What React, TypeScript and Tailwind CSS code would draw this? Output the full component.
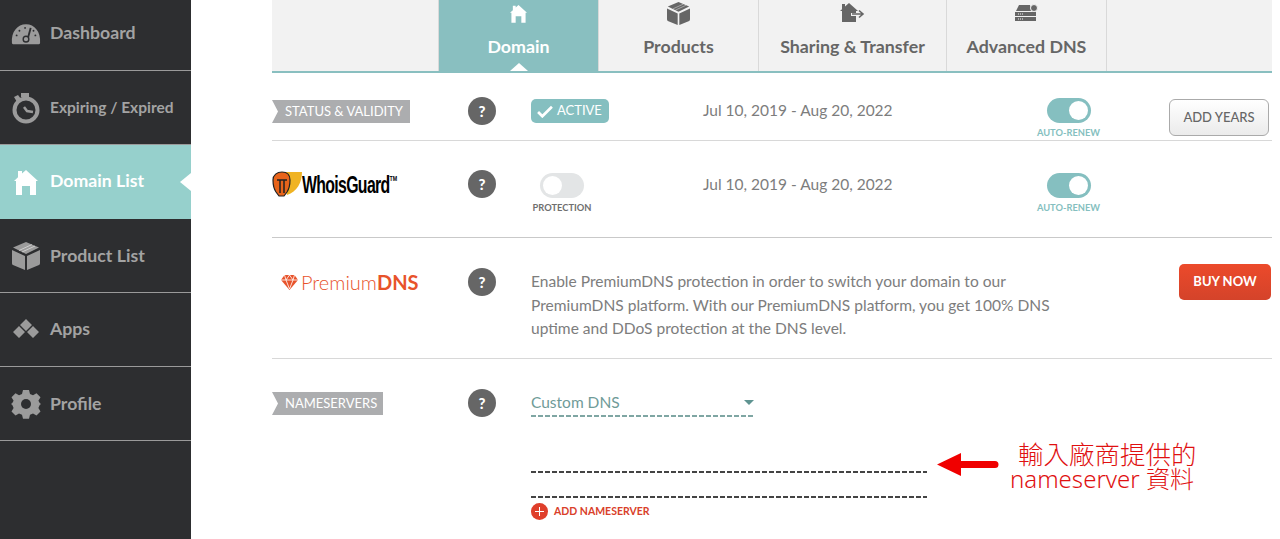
import React from "react";

const Gauge = () => (
  <svg width="30" height="23" viewBox="0 0 32 24"><path d="M1 22C0 10 7 2 16 2s16 8 15 20c0 1-1 1.500-2 1.500H3c-1 0-2-.5-2-1.500z" fill="#9b9b9b"/><path d="M21 6l-3 11" stroke="#2d2e30" strokeWidth="2"/><circle cx="16" cy="18" r="3" fill="#9b9b9b" stroke="#2d2e30" strokeWidth="1.500"/><g fill="#2d2e30"><circle cx="6" cy="14" r="1"/><circle cx="9" cy="9" r="1"/><circle cx="15" cy="6" r="1"/><circle cx="26" cy="14" r="1"/><circle cx="24" cy="9" r="1"/></g></svg>
);
const Clock = () => (
  <svg width="30" height="32" viewBox="0 0 30 32"><circle cx="15" cy="18" r="11.500" fill="none" stroke="#9b9b9b" strokeWidth="4"/><path d="M10 1h8v4h-8zM3 5l4-2 3 4-4 3z" fill="#9b9b9b"/><path d="M13 15l3 4 6 1" fill="none" stroke="#9b9b9b" strokeWidth="2.500"/></svg>
);
const House = ({ c, w, h }: { c: string; w: number; h: number }) => (
  <svg width={w} height={h} viewBox="0 0 24 26"><path d="M12 1l12 11h-2v14h-6v-9H8v9H2V12H0l4-3.700V2h4v2.600z" fill={c}/></svg>
);
const Box = ({ c, w, h }: { c: string; w: number; h: number }) => (
  <svg width={w} height={h} viewBox="0 0 28 28"><path d="M0 8l13 6v14L1 23c-.7-.3-1-1-1-2zM28 8l-13 6v14l12-5c.7-.3 1-1 1-2z" fill={c}/><path d="M14 0L1 5.500 14 12 27 5.500z" fill={c}/><path d="M7 8.500l13-6M10 10l13-6" stroke="#fff" strokeOpacity=".5" strokeWidth="1"/></svg>
);
const Apps = () => (
  <svg width="28" height="20" viewBox="0 0 28 20"><path d="M14 0l6 6-6 6-6-6zM7 7l6 6-6 6-6-6zM21 7l6 6-6 6-6-6z" fill="#9b9b9b"/></svg>
);
const Gear = () => (
  <svg width="30" height="30" viewBox="0 0 30 30"><path d="M12 1h6l1 4 3 1.300 3.500-2.100 4 4-2.100 3.500L28.700 14l1.300 1v0l-1.300 1-1.300 3 2.100 3.500-4 4-3.500-2.100-3 1.300-1 4h-6l-1-4-3-1.300-3.500 2.100-4-4 2.100-3.500L1.300 16 0 15l1.300-1 1.300-2.200L.5 8.200l4-4L8 6.300 11 5z" fill="#9b9b9b"/><circle cx="15" cy="15" r="5" fill="#2d2e30"/></svg>
);
const Share = () => (
  <svg width="26" height="20" viewBox="0 0 26 20"><path d="M9 0l9 8h-2v2h-5v3h5v6H2V8H0l2-1.800V1h3v2.500z" fill="#666"/><path d="M12 11h10M19 7.500l4 3.500-4 3.500" fill="none" stroke="#666" strokeWidth="1.600"/></svg>
);
const Server = () => (
  <svg width="24" height="18" viewBox="0 0 24 18"><path d="M4 1h11l1 6H1z" fill="#666"/><path d="M0 8h21v4H0zM0 13h21v4H0z" fill="#666"/><circle cx="19" cy="4" r="3.500" fill="#666" stroke="#f2f2f2"/><path d="M3 10h6M3 15h6" stroke="#f2f2f2" strokeDasharray="1 1"/></svg>
);
const Help = () => (
  <div className="w-7 h-7 rounded-full bg-[#666666] text-white flex items-center justify-center text-[15px] font-black">?</div>
);
const Toggle = ({ on, label }: { on: boolean; label: string }) => (
  <div className="flex flex-col items-center">
    <div className={`w-[44px] h-[25px] rounded-full flex items-center px-[3px] ${on ? "bg-[#85bfc0] justify-end" : "bg-[#e3e5e6] justify-start"}`}>
      <div className="w-[19px] h-[19px] rounded-full bg-white" />
    </div>
    <div className={`mt-[4px] text-[9.300px] leading-[11px] font-bold whitespace-nowrap ${on ? "text-[#85bfc0]" : "text-[#6f6f6f]"}`}>{label}</div>
  </div>
);
const Tag = ({ children, w }: { children: React.ReactNode; w: string }) => (
  <div className={`${w} h-[23px] bg-[#acadaf] text-white text-[13px] leading-[23px] pl-[13px] whitespace-nowrap [clip-path:polygon(0_0,100%_0,100%_100%,0_100%,6px_50%)]`}>{children}</div>
);
const Tab = ({ w, label, icon, active }: { w: string; label: string; icon: React.ReactNode; active?: boolean }) => (
  <div className={`${w} h-full relative flex flex-col items-center border-l border-[#d9d9d9] ${active ? "bg-[#89bfc0] text-white" : "text-[#666666]"}`}>
    <div className="h-[26px] flex items-center justify-center">{icon}</div>
    <div className="mt-[9px] text-[17.800px] leading-[22px] font-bold whitespace-nowrap">{label}</div>
    {active && <div className="absolute bottom-0 left-1/2 -ml-[9px] w-0 h-0 border-x-[9px] border-x-transparent border-b-[8px] border-b-white" />}
  </div>
);
const Nav = ({ icon, label, h, small, active, pad }: { icon: React.ReactNode; label: string; h: string; small?: boolean; active?: boolean; pad: string }) => (
  <div className={`${h} ${pad} relative flex items-center ${active ? "bg-[#96d0cc] text-white" : "text-[#a3a3a3] border-b-[1.500px] border-[#9a9a9a]"}`}>
    <div className="w-[50px] shrink-0 flex justify-center pl-[4px] pr-[2px]">{icon}</div>
    <span className={`${small ? "text-[15.500px]" : "text-[17.700px]"} font-bold whitespace-nowrap`}>{label}</span>
    {active && <div className="absolute right-0 top-1/2 -mt-[9px] w-0 h-0 border-y-[9px] border-y-transparent border-r-[11px] border-r-white" />}
  </div>
);
const DashLine = ({ dark }: { dark?: boolean }) => (
  <div className={`h-[2px] w-full ${dark ? "bg-[repeating-linear-gradient(to_right,#444444_0,#444444_5px,transparent_5px,transparent_7px)]" : "bg-[repeating-linear-gradient(to_right,#7fa6a3_0,#7fa6a3_5px,transparent_5px,transparent_7px)]"}`} />
);

export default function App() {
  return (
    <div className="w-[1280px] h-[539px] overflow-hidden flex bg-white relative font-['Lato',sans-serif]">
      <aside className="w-[191px] shrink-0 h-full bg-[#2d2e30]">
        <Nav h="h-[71px]" pad="pb-[4px]" icon={<Gauge />} label="Dashboard" />
        <Nav h="h-[74px]" pad="pt-[1px]" icon={<Clock />} label="Expiring / Expired" small />
        <Nav h="h-[74px]" pad="pb-[1px]" icon={<House c="#fff" w={24} h={26} />} label="Domain List" active />
        <Nav h="h-[74px]" pad="pt-[1px]" icon={<Box c="#9b9b9b" w={28} h={28} />} label="Product List" />
        <Nav h="h-[74px]" pad="pb-[1px]" icon={<Apps />} label="Apps" />
        <Nav h="h-[74px]" pad="pt-[1px]" icon={<Gear />} label="Profile" />
      </aside>
      <main className="ml-[81px] w-[1000px]">
        <div className="h-[73px] bg-[#f2f2f2] border-b-2 border-[#89bfc0] flex">
          <div className="w-[166px]" />
          <Tab w="w-[160px]" label="Domain" icon={<House c="#fff" w={17} h={19} />} active />
          <Tab w="w-[160px]" label="Products" icon={<Box c="#666" w={23} h={23} />} />
          <Tab w="w-[188px]" label="Sharing & Transfer" icon={<Share />} />
          <Tab w="w-[160px]" label="Advanced DNS" icon={<Server />} />
          <div className="flex-1 border-l border-[#d9d9d9]" />
        </div>

        <div className="h-[68px] border-b border-[#d8d8d8] flex pt-[24px] text-[#7d7d7d]">
          <div className="w-[196px] pt-[3px]"><Tag w="w-[138px]">STATUS &amp; VALIDITY</Tag></div>
          <div className="w-[63px]"><Help /></div>
          <div className="w-[172px] pt-[2px]">
            <div className="w-[78px] h-[24px] rounded-[5px] bg-[#85bfc0] text-white text-[13px] flex items-center pl-[6px] gap-[4px]">
              <svg width="16" height="13" viewBox="0 0 15 12"><path d="M1 6.500l4 4L14 1.500" fill="none" stroke="#fff" strokeWidth="2.500"/></svg>
              ACTIVE
            </div>
          </div>
          <div className="w-[324px] text-[15.500px] leading-[28px] -mt-[1px]">Jul 10, 2019 - Aug 20, 2022</div>
          <div className="w-[82px] pt-[1px] pl-[1px]"><Toggle on label="AUTO-RENEW" /></div>
          <div className="ml-[60px] w-[100px] h-[37px] mt-[2px] rounded-[6px] border border-[#aaaaaa] bg-gradient-to-b from-white to-[#ebebeb] text-[#666666] text-[13px] font-medium flex items-center justify-center">ADD YEARS</div>
        </div>

        <div className="h-[97px] border-b border-[#c9c9c9] flex pt-[29px] text-[#7d7d7d]">
          <div className="w-[196px] flex items-start">
            <div className="flex items-center h-[28px]">
              <svg width="31" height="26" viewBox="0 0 31 26"><path d="M9 1h21c0 10-5 20-15 23z" fill="#f0b323"/><path d="M1 9c0-5 4-8 9-8s8 3 8 8c0 5-1 9-3 12l-3 4H7l-3-4C2 18 1 14 1 9z" fill="#e8641b" stroke="#222" strokeWidth="1.200"/><path d="M5 9h10M8 9v13M12 9v13" stroke="#222" strokeWidth="1.500" fill="none"/></svg>
              <span className="font-['Liberation_Sans',sans-serif] font-bold text-[24px] leading-none tracking-[-1px] text-black ml-[-1px] mt-[2px] [transform:scaleX(0.66)] origin-left whitespace-nowrap">WhoisGuard<sup className="text-[8px] top-[-12px] tracking-normal">TM</sup></span>
            </div>
          </div>
          <div className="w-[63px]"><Help /></div>
          <div className="w-[172px] pt-[3px]">
            <div className="w-[62px]"><Toggle on={false} label="PROTECTION" /></div>
          </div>
          <div className="w-[324px] text-[15.500px] leading-[28px]">Jul 10, 2019 - Aug 20, 2022</div>
          <div className="w-[82px] pt-[3px] pl-[1px]"><Toggle on label="AUTO-RENEW" /></div>
        </div>

        <div className="h-[121px] border-b border-[#d8d8d8] flex pt-[30px] text-[#7d7d7d]">
          <div className="w-[196px] pl-[9px] h-[28px] flex items-center text-[#e8532b]">
            <svg width="17" height="15" viewBox="0 0 17 15"><path d="M3.500 0h10L17 5l-8.500 10L0 5z" fill="#e8532b"/><path d="M0 5h17M5 5l3.500 9L12 5M3.500 0L5 5l3.500-5L12 5l1.500-5" stroke="#fff" strokeWidth=".8" fill="none"/></svg>
            <span className="ml-[3px] text-[20px] leading-none font-light whitespace-nowrap">Premium<span className="font-bold">DNS</span></span>
          </div>
          <div className="w-[63px]"><Help /></div>
          <div className="w-[540px] text-[15.550px] leading-[23.500px] pt-[2px]">
            Enable PremiumDNS protection in order to switch your domain to our PremiumDNS platform. With our PremiumDNS platform, you get 100% DNS uptime and DDoS protection at the DNS level.
          </div>
          <div className="ml-[108px] w-[92px] h-[36px] -mt-[4px] rounded-[5px] bg-gradient-to-b from-[#ec4a2b] to-[#d4432a] text-white text-[13px] font-bold flex items-center justify-center">BUY NOW</div>
        </div>

        <div className="flex pt-[30px]">
          <div className="w-[196px] pt-[3px]"><Tag w="w-[111px]">NAMESERVERS</Tag></div>
          <div className="w-[63px]"><Help /></div>
          <div className="w-[396px]">
            <div className="w-[224px]">
              <div className="h-[26px] flex items-center justify-between text-[#6f9b98] text-[15.500px] pt-[1px]">
                <span>Custom DNS</span>
                <div className="w-0 h-0 mr-[1px] border-x-[5px] border-x-transparent border-t-[5px] border-t-[#5f9491]" />
              </div>
              <DashLine />
            </div>
            <div className="h-[54px]" />
            <DashLine dark />
            <div className="h-[23px]" />
            <DashLine dark />
            <div className="mt-[5px] flex items-center gap-[6px] text-[#d9402a] text-[10.500px] font-bold">
              <div className="w-[17px] h-[17px] rounded-full bg-[#df3f2b] relative flex items-center justify-center">
                <svg width="11" height="11" viewBox="0 0 11 11"><path d="M5.500 1v9M1 5.500h9" stroke="#fff" strokeWidth="1"/></svg>
              </div>
              ADD NAMESERVER
            </div>
          </div>
        </div>
      </main>

      <svg className="absolute left-[937px] top-[452px]" width="62" height="25" viewBox="0 0 62 25"><path d="M0 12.500L24 1v8h34a3.500 3.500 0 010 7H24V24z" fill="#f00000"/></svg>
      <div className="absolute left-[1005px] top-[442px] w-[195px] text-[#e01010] font-['Noto_Sans','Noto_Sans_CJK_TC',sans-serif] font-light">
        <div className="ml-[13px] text-[25.500px] leading-[25px] whitespace-nowrap">輸入廠商提供的</div>
        <div className="ml-[5px] text-[24px] leading-[24px] whitespace-nowrap">nameserver 資料</div>
      </div>
    </div>
  );
}
